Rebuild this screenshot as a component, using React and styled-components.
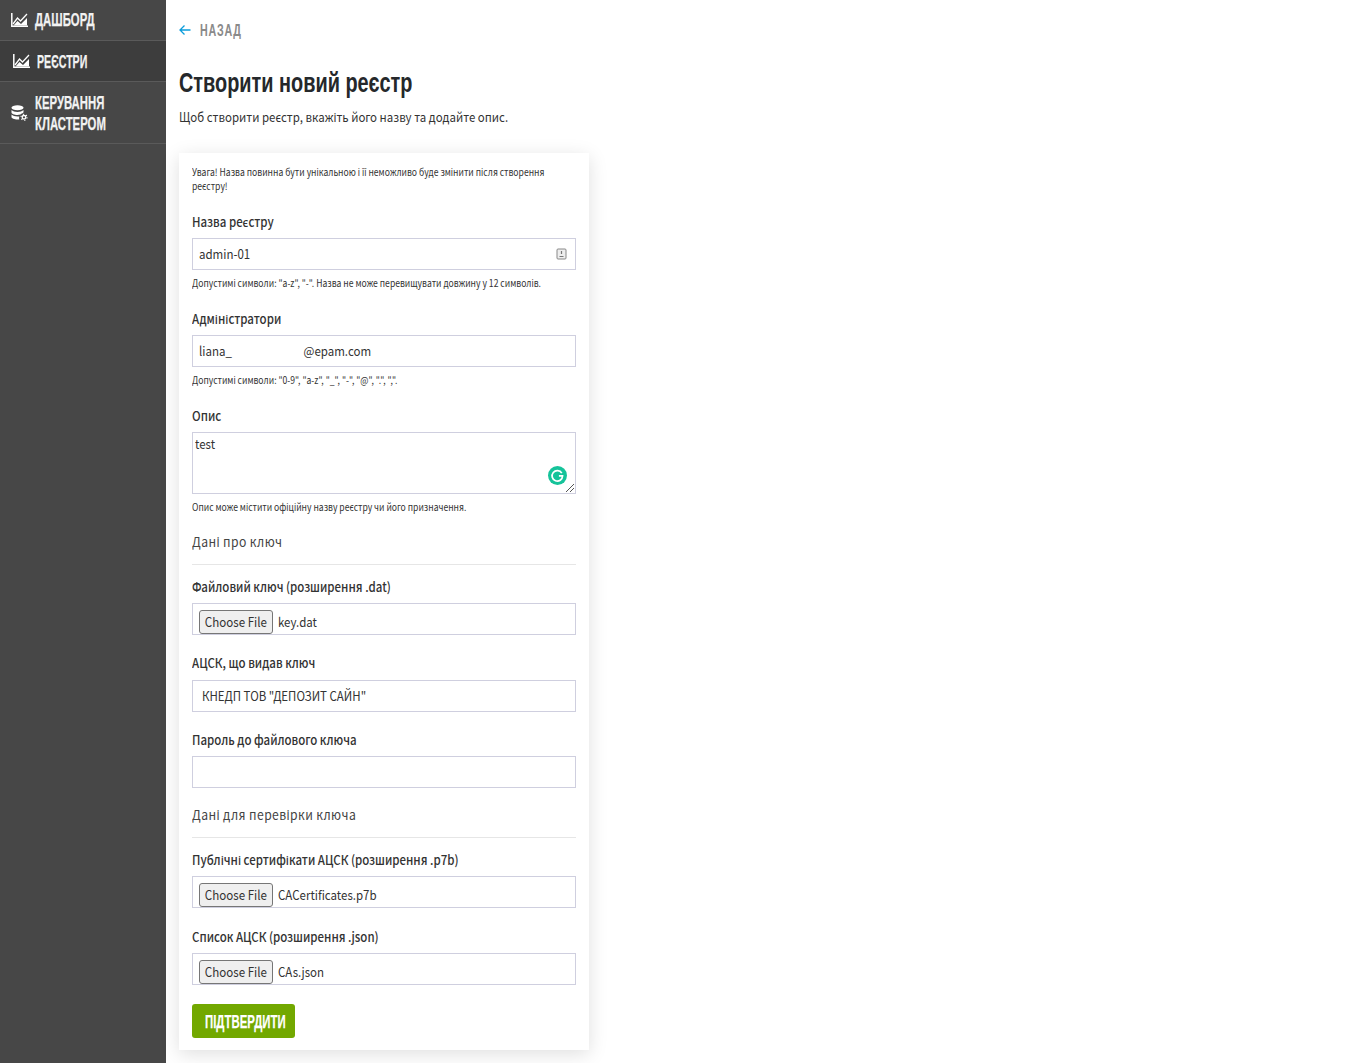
import React from 'react';
import styled, { createGlobalStyle } from 'styled-components';

const Global = createGlobalStyle`
  html, body { margin: 0; padding: 0; background: #fff; }
  body { font-family: "Noto Sans CJK SC", "Noto Sans", sans-serif; color: #212529; }
`;
const Page = styled.div`display: flex; min-height: 1063px; width: 1365px; overflow: hidden;`;
const Sidebar = styled.nav`width: 166px; flex: none; background: #474747;`;
const NavItem = styled.div`
  display: flex; align-items: center;
  height: ${p => p.$h}px; box-sizing: border-box;
  padding-left: ${p => p.$active ? 13 : 11}px;
  gap: 7px;
  background: ${p => p.$active ? '#3d3d3d' : 'transparent'};
  border-bottom: 1px solid #5a5a5a;
`;
const Condensed = styled.span`
  display: inline-block; font-family: "Liberation Sans", sans-serif; font-weight: 700;
  transform: scaleX(${p => p.$sx || 0.63}); transform-origin: left center; white-space: nowrap;
  -webkit-text-stroke: .25px currentColor;
`;
const NavLabel = styled(Condensed)`
  color: #f2f2f2; font-size: 18px; line-height: 21px; padding-top: ${p => p.$drop || 0}px;
`;
const Main = styled.main`flex: 1; padding: 0 0 0 13px; min-width: 0;`;
const Back = styled.div`display: flex; align-items: center; height: 20px; margin-top: 20px; gap: 9px;`;
const BackLabel = styled(Condensed)`
  color: #8a8a8a; font-size: 17px; letter-spacing: 1.2px; padding-top: 1px; -webkit-text-stroke: 0;
`;
const Title = styled.h1`margin: 26px 0 0; height: 29px; font-size: 28px; line-height: 29px; font-weight: 400;`;
const TitleText = styled(Condensed)`font-size: 28px; color: #25282b; -webkit-text-stroke: 0;`;

/* The reference's text face is narrower than the installed one: every running text is condensed to its width. */
const narrow = (sx) => `
  transform: scaleX(${sx}); transform-origin: left center; width: calc(100% / ${sx});
`;
const Sub = styled.p`
  margin: 12px 0 0; font-size: 13px; line-height: 20px; color: #333; ${narrow(0.883)}
  width: 800px;
`;
const Card = styled.section`
  width: 384px; margin-top: 26px; padding: 12px 13px 12px; background: #fff;
  box-shadow: 0 4px 18px rgba(0,0,0,.13);
`;
const Hint = styled.p`
  margin: ${p => p.$mt || 0}px 0 0; font-size: 10px; line-height: 14px; color: #333; ${narrow(0.861)}
`;
const Label = styled.label`
  display: block; font-size: 13px; line-height: 20px; font-weight: 500; color: #333;
  ${narrow(0.883)}
`;
const Field = styled.div`margin-top: ${p => p.$mt}px;`;
const Input = styled.div`
  box-sizing: border-box; position: relative; margin-top: ${p => p.$mt ?? 6}px; height: 32px; width: 384px;
  border: 1px solid #cfcfdf; display: flex; align-items: center;
  padding: 0 0 2px ${p => p.$pl ?? 6}px; font-size: 13px; color: #333;
`;
const Value = styled.span`
  display: inline-block; white-space: pre; transform: scaleX(.885); transform-origin: left center;
`;
const Gap = styled.span`display: inline-block; width: ${p => p.$w}px;`;
const Area = styled.div`
  box-sizing: border-box; position: relative; margin-top: 6px; height: 62px; border: 1px solid #cfcfdf;
  padding: 1px 2px; font-size: 13px; line-height: 20px; color: #333;
`;
const Grammarly = styled.svg`position: absolute; right: 8px; bottom: 8px;`;
const Grip = styled.svg`position: absolute; right: 0; bottom: 0;`;
const KeyIcon = styled.svg`position: absolute; right: 8px; top: 9px;`;
const FileBox = styled(Input)`align-items: flex-start; padding: 6px 0 0 6px; overflow: hidden;`;
const ChooseBtn = styled.span`
  box-sizing: border-box; width: 74px; height: 24px; flex: none; padding-bottom: 2px;
  border: 1px solid #767676; border-radius: 3px;
  background: #efefef; display: flex; align-items: center; justify-content: center; color: #333; font-size: 13px;
  white-space: nowrap;
`;
const ChooseText = styled.span`display: inline-block; transform: scaleX(.89);`;
const FileName = styled(Value)`margin-left: 5px; line-height: 24px;`;
const Section = styled.h5`
  margin: ${p => p.$mt}px 0 0; padding-bottom: 11px; border-bottom: 1px solid #e6e6e6;
  font-size: 13.5px; font-weight: 400; line-height: 22px; color: #444;
`;
const SectionText = styled.span`
  display: inline-block; position: relative; top: -1px; letter-spacing: .45px;
  transform: scaleX(.9); transform-origin: left center;
`;
const Submit = styled.button`
  display: block; margin-top: 19px; width: 103px; height: 34px; border: 0; border-radius: 3px;
  background: #72a800; padding: 1px 0 0 13px; text-align: left;
`;
const SubmitLabel = styled(Condensed)`color: #fff; font-size: 19px; line-height: 34px; transform: scaleX(.6);`;

const ChartIcon = () => (
  <svg width="17" height="14" viewBox="0 0 17 14" fill="none">
    <path d="M.8 0v13.200H17" stroke="#fff" strokeWidth="1.500" />
    <path d="M2 11L6.500 5l3 3L16 1" stroke="#fff" strokeWidth="1.300" />
    <path d="M2.500 12.500L6.500 8l3.500 3L16 5v7.500z" fill="#fff" />
  </svg>
);
const DbIcon = () => (
  <svg width="17" height="16" viewBox="0 0 17 16" fill="#fff">
    <ellipse cx="6.500" cy="2.800" rx="6" ry="2.500" />
    <path d="M.5 5v2.400c0 1.300 2.700 2.500 6 2.500 1 0 2-.1 2.900-.4.500-.7 1.300-1.200 2.100-1.300.6-.3 1-.7 1-1.200V5c-1.200 1.300-3.500 2-6 2S1.700 6.300.5 5z" />
    <path d="M.5 9.600V12c0 1.300 2.700 2.500 6 2.500.6 0 1.200 0 1.800-.1a4 4 0 0 1 .1-3c-.6.100-1.200.1-1.900.1-2.500 0-4.800-.7-6-1.900z" />
    <circle cx="13" cy="12.300" r="1.800" fill="none" stroke="#fff" strokeWidth="1.300" />
    <circle cx="13" cy="12.300" r="3" fill="none" stroke="#fff" strokeWidth="1.100" strokeDasharray="1.300 1.850" />
  </svg>
);
const BackArrow = () => (
  <svg width="12" height="12" viewBox="0 0 12 12" fill="none" stroke="#0d9ddb" strokeWidth="1.300">
    <path d="M11.500 6H1M5.500 1.500L1 6l4.500 4.500" />
  </svg>
);
const FileRow = ({ name }) => (
  <FileBox>
    <ChooseBtn><ChooseText>Choose File</ChooseText></ChooseBtn>
    <FileName>{name}</FileName>
  </FileBox>
);

export default function App() {
  return (
    <Page>
      <Global />
      <Sidebar>
        <NavItem $h={41}><ChartIcon /><NavLabel>ДАШБОРД</NavLabel></NavItem>
        <NavItem $h={41} $active><ChartIcon /><NavLabel $sx={0.59} $drop={2}>РЕЄСТРИ</NavLabel></NavItem>
        <NavItem $h={62}><DbIcon /><NavLabel $drop={2}>КЕРУВАННЯ<br />КЛАСТЕРОМ</NavLabel></NavItem>
      </Sidebar>
      <Main>
        <Back><BackArrow /><BackLabel>НАЗАД</BackLabel></Back>
        <Title><TitleText $sx={0.71}>Створити новий реєстр</TitleText></Title>
        <Sub>Щоб створити реєстр, вкажіть його назву та додайте опис.</Sub>
        <Card>
          <Hint>Увага! Назва повинна бути унікальною і її неможливо буде змінити після створення реєстру!</Hint>
          <Field $mt={19}>
            <Label>Назва реєстру</Label>
            <Input><Value>admin-01</Value>
              <KeyIcon width="11" height="12" viewBox="0 0 11 12" fill="none">
                <rect x="1" y="1" width="9" height="10" rx="1" fill="#eee" stroke="#888" />
                <path d="M5.500 3v3M3.500 8.500h4" stroke="#777" strokeWidth="1.200" />
              </KeyIcon>
            </Input>
            <Hint $mt={6}>Допустимі символи: "a-z", "-". Назва не може перевищувати довжину у 12 символів.</Hint>
          </Field>
          <Field $mt={19}>
            <Label>Адміністратори</Label>
            <Input><Value>liana_<Gap $w={81} />@epam.com</Value></Input>
            <Hint $mt={6}>Допустимі символи: "0-9", "a-z", "_", "-", "@", ".", ",".</Hint>
          </Field>
          <Field $mt={19}>
            <Label>Опис</Label>
            <Area><Value>test</Value>
              <Grammarly width="19" height="19" viewBox="0 0 20 20">
                <circle cx="10" cy="10" r="10" fill="#15c39a" />
                <path d="M14.500 7.500a5.500 5.500 0 1 0 .8 3h-3.800" fill="none" stroke="#fff" strokeWidth="1.800" />
              </Grammarly>
              <Grip width="10" height="10" viewBox="0 0 10 10" stroke="#555"><path d="M1 9l8-8M5 9l4-4" /></Grip>
            </Area>
            <Hint $mt={6}>Опис може містити офіційну назву реєстру чи його призначення.</Hint>
          </Field>
          <Section $mt={17}><SectionText>Дані про ключ</SectionText></Section>
          <Field $mt={12}>
            <Label>Файловий ключ (розширення .dat)</Label>
            <FileRow name="key.dat" />
          </Field>
          <Field $mt={18}>
            <Label>АЦСК, що видав ключ</Label>
            <Input $pl={9} $mt={7}><Value>КНЕДП ТОВ "ДЕПОЗИТ САЙН"</Value></Input>
          </Field>
          <Field $mt={18}>
            <Label>Пароль до файлового ключа</Label>
            <Input />
          </Field>
          <Section $mt={16}><SectionText>Дані для перевірки ключа</SectionText></Section>
          <Field $mt={12}>
            <Label>Публічні сертифікати АЦСК (розширення .p7b)</Label>
            <FileRow name="CACertificates.p7b" />
          </Field>
          <Field $mt={19}>
            <Label>Список АЦСК (розширення .json)</Label>
            <FileRow name="CAs.json" />
          </Field>
          <Submit><SubmitLabel>ПІДТВЕРДИТИ</SubmitLabel></Submit>
        </Card>
      </Main>
    </Page>
  );
}
